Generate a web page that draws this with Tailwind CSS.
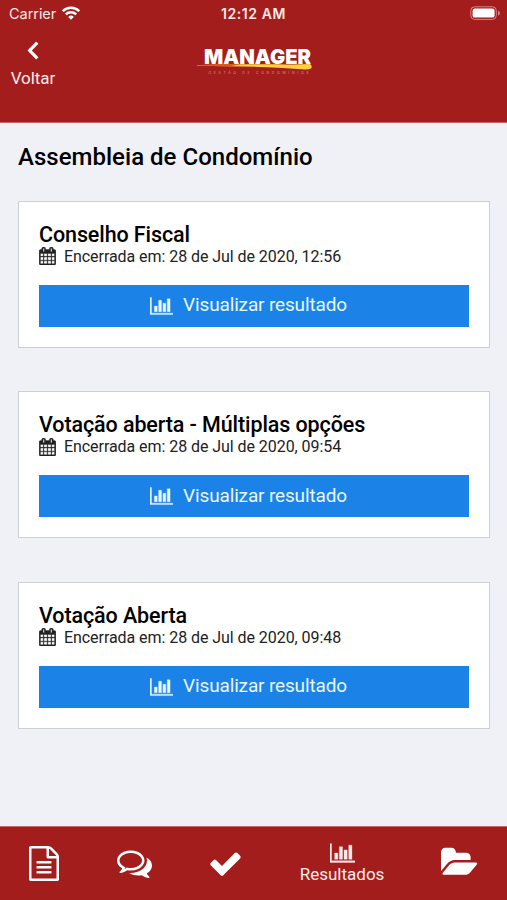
<!DOCTYPE html>
<html lang="pt-BR">
<head>
<meta charset="utf-8">
<title>Assembleia de Condomínio</title>
<script src="https://cdn.jsdelivr.net/npm/@tailwindcss/browser@4"></script>
</head>
<body class="bg-[#eff1f6] font-['Roboto',sans-serif] text-black">
<svg class="hidden" aria-hidden="true">
  <symbol id="chart" viewBox="0 0 2048 1792"><path d="M640 896v512H384V896h256zm384-512v1024H768V384h256zm1024 1152v128H0V128h128v1408h1920zM1408 640v768h-256V640h256zm384-384v1152h-256V256h256z"/></symbol>
  <symbol id="calendar" viewBox="64 0 1664 1792"><path d="M192 1664h288v-288h-288v288zm352 0h320v-288h-320v288zm-352-352h288v-320h-288v320zm352 0h320v-320h-320v320zm-352-384h288v-288h-288v288zm736 736h320v-288h-320v288zm-384-736h320v-288h-320v288zm768 736h288v-288h-288v288zm-384-352h320v-320h-320v320zm-352-864v-288q0-13-9.500-22.500t-22.500-9.500h-64q-13 0-22.500 9.500t-9.500 22.500v288q0 13 9.500 22.500t22.500 9.500h64q13 0 22.500-9.500t9.500-22.500zm736 864h288v-320h-288v320zm-384-384h320v-288h-320v288zm384 0h288v-288h-288v288zm32-480v-288q0-13-9.500-22.500t-22.500-9.500h-64q-13 0-22.500 9.500t-9.500 22.500v288q0 13 9.500 22.500t22.500 9.500h64q13 0 22.500-9.500t9.500-22.500zm384-64v1280q0 52-38 90t-90 38h-1408q-52 0-90-38t-38-90v-1280q0-52 38-90t90-38h128v-96q0-66 47-113t113-47h64q66 0 113 47t47 113v96h384v-96q0-66 47-113t113-47h64q66 0 113 47t47 113v96h128q52 0 90 38t38 90z"/></symbol>
</svg>
<div class="flex h-[900px] w-[507px] flex-col overflow-hidden">
  <header class="h-[123px] shrink-0 border-b border-[#c9686b] bg-[#a31d1d] text-white">
    <div class="grid h-7 grid-cols-3 items-center pl-[9px] pr-[6px] font-['Inter',sans-serif] text-[#ffe9e6]">
      <div class="flex items-center gap-[6px]">
        <span class="text-[14.5px] leading-7 tracking-[-0.05px]">Carrier</span>
        <svg class="-mt-[2px] h-[14px] w-[18px]" viewBox="0 0 18 14" fill="none" stroke="#fff" stroke-width="2.500"><path d="M.8 5.200a11.600 11.600 0 0 1 16.400 0M3.800 8.300a7.400 7.400 0 0 1 10.400 0"/><path d="M9 13.700 6.200 10.900a4 4 0 0 1 5.600 0z" fill="#fff" stroke="none"/></svg>
      </div>
      <span class="pr-[3px] text-center text-[14px] font-semibold leading-7 tracking-[.6px]">12:12 AM</span>
      <svg class="-mt-[2px] h-[14px] w-[31px] justify-self-end" viewBox="0 0 31 14"><rect x=".8" y=".8" width="25.500" height="12.600" rx="3.800" fill="none" stroke="#d98583"/><rect x="2.600" y="2.600" width="22" height="9" rx="2.200" fill="#fff"/><path d="M28 4.700c2.600.8 2.600 4 0 4.800z" fill="#d98583"/></svg>
    </div>
    <div class="grid grid-cols-3">
      <div class="flex w-[66px] flex-col items-center pt-[13px]">
        <svg class="h-[19px] w-3" viewBox="0 0 12 19" fill="none" stroke="#fff" stroke-width="3.200"><path d="M10.300 1.700 2.700 9.500l7.600 7.800"/></svg>
        <span class="mt-[6px] text-[17px] leading-6 tracking-[-.05px] text-[#ffeceb]">Voltar</span>
      </div>
      <svg class="mt-4 h-9 w-[120px] justify-self-center" viewBox="0 0 120 36">
        <text x="10" y="20" textLength="107" lengthAdjust="spacingAndGlyphs" font-family="Inter" font-weight="900" font-size="20.500" fill="#fff">MANAGER</text>
        <path d="M3 21.500C30 20 70 20 100 20.500L116 20q3 2.500 1 4.500-3 1.500-9 .8C75 22.500 40 22.200 3 22z" fill="#ffd23c"/>
        <path d="M3 21.500C18 20 35 19.800 46 20.500L36 22.300 3 22z" fill="#d85a21"/>
        <text x="14.500" y="29.800" textLength="100" font-family="Inter" font-size="3.500" fill="#e08f8a">GESTÃO DE CONDOMÍNIOS</text>
      </svg>
    </div>
  </header>

  <main class="flex-1 px-[18px] pt-[18px]">
    <h1 class="text-[24px] font-medium leading-8 tracking-[.02px]">Assembleia de Condomínio</h1>
    <div class="mt-[27.5px] flex flex-col gap-[43.5px]">
      <section class="h-[147px] w-[472px] border border-[#cdd0d3] bg-white px-5 pt-[21px]">
        <h2 class="text-[21.500px] font-medium leading-6 tracking-[-.1px]">Conselho Fiscal</h2>
        <p class="flex h-5 items-center gap-[8px] text-[16px] tracking-[-.06px] text-[#222]"><svg class="-mt-px h-[18px] w-[17px] fill-[#222] stroke-[#222] stroke-[40px]"><use href="#calendar"/></svg>Encerrada em: 28 de Jul de 2020, 12:56</p>
        <button class="mt-[18px] flex h-[42px] w-[430px] items-center justify-center gap-[10px] bg-[#1b83e7] pr-[11px] text-[19px] tracking-[-.15px] text-[#e8f7ff]"><svg class="h-5 w-[23px] fill-current stroke-current stroke-[30px]"><use href="#chart"/></svg>Visualizar resultado</button>
      </section>
      <section class="h-[147px] w-[472px] border border-[#cdd0d3] bg-white px-5 pt-[21px]">
        <h2 class="text-[21.500px] font-medium leading-6 tracking-[-.1px]">Votação aberta - Múltiplas opções</h2>
        <p class="flex h-5 items-center gap-[8px] text-[16px] tracking-[-.06px] text-[#222]"><svg class="-mt-px h-[18px] w-[17px] fill-[#222] stroke-[#222] stroke-[40px]"><use href="#calendar"/></svg>Encerrada em: 28 de Jul de 2020, 09:54</p>
        <button class="mt-[18px] flex h-[42px] w-[430px] items-center justify-center gap-[10px] bg-[#1b83e7] pr-[11px] text-[19px] tracking-[-.15px] text-[#e8f7ff]"><svg class="h-5 w-[23px] fill-current stroke-current stroke-[30px]"><use href="#chart"/></svg>Visualizar resultado</button>
      </section>
      <section class="h-[147px] w-[472px] border border-[#cdd0d3] bg-white px-5 pt-[21px]">
        <h2 class="text-[21.500px] font-medium leading-6 tracking-[-.1px]">Votação Aberta</h2>
        <p class="flex h-5 items-center gap-[8px] text-[16px] tracking-[-.06px] text-[#222]"><svg class="-mt-px h-[18px] w-[17px] fill-[#222] stroke-[#222] stroke-[40px]"><use href="#calendar"/></svg>Encerrada em: 28 de Jul de 2020, 09:48</p>
        <button class="mt-[18px] flex h-[42px] w-[430px] items-center justify-center gap-[10px] bg-[#1b83e7] pr-[11px] text-[19px] tracking-[-.15px] text-[#e8f7ff]"><svg class="h-5 w-[23px] fill-current stroke-current stroke-[30px]"><use href="#chart"/></svg>Visualizar resultado</button>
      </section>
    </div>
  </main>

  <nav class="flex h-[74px] shrink-0 items-center justify-between border-t border-[#c9686b] bg-[#a31d1d] pl-[29px] pr-[29px] text-white">
    <svg class="h-[35px] w-[30px] fill-current" viewBox="128 0 1536 1792"><path d="M1596 380q28 28 48 76t20 88v1152q0 40-28 68t-68 28h-1344q-40 0-68-28t-28-68v-1600q0-40 28-68t68-28h896q40 0 88 20t76 48zm-444-244v376h376q-10-29-22-41l-313-313q-12-12-41-22zm384 1528v-1024h-416q-40 0-68-28t-28-68v-416h-768v1536h1280zm-1024-864q0-14 9-23t23-9h704q14 0 23 9t9 23v64q0 14-9 23t-23 9h-704q-14 0-23-9t-9-23v-64zm736 224q14 0 23 9t9 23v64q0 14-9 23t-23 9h-704q-14 0-23-9t-9-23v-64q0-14 9-23t23-9h704zm0 256q14 0 23 9t9 23v64q0 14-9 23t-23 9h-704q-14 0-23-9t-9-23v-64q0-14 9-23t23-9h704z"/></svg>
    <svg class="ml-px mt-[3px] h-[35px] w-[35px] fill-current" viewBox="0 128 1792 1792"><path d="M704 384q-153 0-286 52t-211.500 141-78.500 191q0 82 53 158t149 132l97 56-35 84q34-20 62-39l44-31 53 10q78 14 153 14 153 0 286-52t211.500-141 78.500-191-78.500-191-211.500-141-286-52zm0-128q191 0 353.500 68.500t256.500 186.500 94 257-94 257-256.500 186.500-353.500 68.500q-86 0-176-16-124 88-278 128-36 9-86 16h-3q-11 0-20.500-8t-11.500-21q-1-3-1-6.500t.5-6.500 2-6l2.500-5 3.500-5.500 4-5 4.500-5 4-4.500q5-6 23-25t26-29.500 22.500-29 25-38.500 20.500-44q-124-72-195-177t-71-224q0-139 94-257t256.500-186.500 353.500-68.500zm822 1169q10 24 20.500 44t25 38.500 22.500 29 26 29.500 23 25q1 1 4 4.500t4.500 5 4 5 3.500 5.500l2.500 5 2 6 .5 6.500-1 6.500q-3 14-13 22t-22 7q-50-7-86-16-154-40-278-128-90 16-176 16-271 0-472-132 58 4 88 4 161 0 309-45t264-129q125-92 192-212t67-254q0-77-23-152 129 71 204 178t75 230q0 120-71 224.500t-195 176.500z"/></svg>
    <svg class="h-[35px] w-[35px] fill-current" viewBox="0 0 1792 1792"><path d="M1671 566q0 40-28 68l-724 724-136 136q-28 28-68 28t-68-28l-136-136-362-362q-28-28-28-68t28-68l136-136q28-28 68-28t68 28l294 295 656-657q28-28 68-28t68 28l136 136q28 28 28 68z"/></svg>
    <div class="-mt-[2px] flex flex-col items-center text-[#ffeceb]">
      <svg class="h-[22px] w-[25px] fill-current stroke-current stroke-[30px]"><use href="#chart"/></svg>
      <span class="text-[17px] leading-5">Resultados</span>
    </div>
    <svg class="-mt-[2px] h-[35px] w-[37px] fill-current" viewBox="0 0 1920 1792"><path d="M1879 952q0 31-31 66l-336 396q-43 51-120.500 86.500t-143.500 35.500h-1088q-34 0-60.500-13t-26.500-43q0-31 31-66l336-396q43-51 120.500-86.500t143.500-35.500h1088q34 0 60.500 13t26.500 43zm-343-344v160h-832q-94 0-197 47.500t-164 119.500l-337 396-5 6q0-4-.5-12.500t-.5-12.500v-960q0-92 66-158t158-66h320q92 0 158 66t66 158v32h544q92 0 158 66t66 158z"/></svg>
  </nav>
</div>
</body>
</html>
